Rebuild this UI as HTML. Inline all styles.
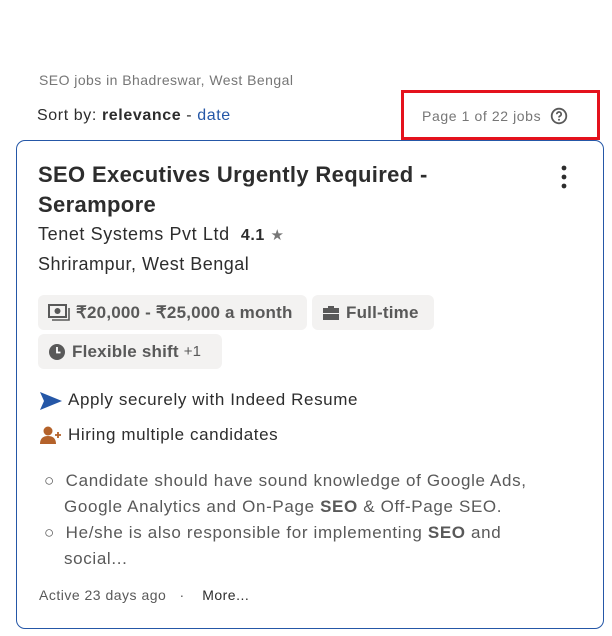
<!DOCTYPE html>
<html><head><meta charset="utf-8"><style>
*{margin:0;padding:0;box-sizing:border-box}
body{width:612px;height:636px;background:#fff;font-family:"Liberation Sans",sans-serif;color:#2d2d2d;position:relative;overflow:hidden}
.a{position:absolute;white-space:nowrap}
.chip{position:absolute;background:#f3f2f1;border-radius:6px;height:35px;font-weight:bold;font-size:17px;color:#595959;display:flex;align-items:center;padding-left:10px;letter-spacing:0.2px}
.chip svg{margin-right:6px}
.desc{font-size:17px;color:#595959;letter-spacing:0.65px}
</style></head><body>
<div class="a" style="left:39px;top:72px;font-size:14px;color:#767676;letter-spacing:0.45px">SEO jobs in Bhadreswar, West Bengal</div>
<div class="a" style="left:37px;top:107px;font-size:16px;color:#2d2d2d;letter-spacing:0.6px">Sort by: <b>relevance</b> - <span style="color:#2557a7">date</span></div>
<div class="a" style="left:401px;top:90px;width:199px;height:50px;border:3px solid #e4121d"></div>
<div class="a" style="left:422px;top:108px;font-size:14px;color:#767676;letter-spacing:0.6px">Page 1 of 22 jobs</div>
<svg class="a" style="left:550px;top:107px" width="18" height="18" viewBox="0 0 18 18"><circle cx="9" cy="9" r="7.3" fill="none" stroke="#595959" stroke-width="1.8"/><path d="M6.8 7.2a2.2 2.2 0 1 1 3 2c-.7.3-.8.7-.8 1.3" fill="none" stroke="#595959" stroke-width="1.7"/><circle cx="9" cy="12.8" r="1" fill="#595959"/></svg>
<div class="a" style="left:16px;top:140px;width:588px;height:489px;border:1px solid #2557a7;border-radius:9px"></div>
<div class="a" style="left:38px;top:160px;font-size:22px;font-weight:bold;line-height:30px;color:#2d2d2d;letter-spacing:0.35px">SEO Executives Urgently Required -<br>Serampore</div>
<svg class="a" style="left:560px;top:165px" width="8" height="24" viewBox="0 0 8 24"><circle cx="4" cy="3" r="2.4" fill="#2d2d2d"/><circle cx="4" cy="12" r="2.4" fill="#2d2d2d"/><circle cx="4" cy="21" r="2.4" fill="#2d2d2d"/></svg>
<div class="a" style="left:38px;top:224px;font-size:18px;letter-spacing:0.6px">Tenet Systems Pvt Ltd&nbsp; <b style="font-size:16px">4.1</b> <span style="color:#767676;font-size:15px">★</span></div>
<div class="a" style="left:38px;top:254px;font-size:18px;letter-spacing:0.5px">Shrirampur, West Bengal</div>
<div class="chip" style="left:38px;top:295px;width:269px"><svg width="22" height="18" viewBox="0 0 22 18"><rect x="1" y="1" width="17" height="12" fill="none" stroke="#595959" stroke-width="2"/><circle cx="9.5" cy="7" r="3" fill="#595959"/><path d="M4 16h17V4" fill="none" stroke="#595959" stroke-width="1.6"/></svg>₹20,000 - ₹25,000 a month</div>
<div class="chip" style="left:312px;top:295px;width:122px"><svg width="18" height="16" viewBox="0 0 18 16"><path d="M6 3V1h6v2h5v5H1V3z M1 9h16v6H1z" fill="#595959"/></svg>Full-time</div>
<div class="chip" style="left:38px;top:334px;width:184px"><svg width="18" height="18" viewBox="0 0 18 18"><circle cx="9" cy="9" r="8" fill="#595959"/><path d="M9 4v5.5h3.5" fill="none" stroke="#fff" stroke-width="1.8"/></svg>Flexible shift <span style="font-weight:normal;font-size:15px;margin-left:5px">+1</span></div>
<svg class="a" style="left:40px;top:392px" width="22" height="18" viewBox="0 0 22 18"><path d="M0 0L22 9 0 18 4 9z" fill="#2557a7"/></svg>
<div class="a" style="left:68px;top:390px;font-size:17px;letter-spacing:0.6px">Apply securely with Indeed Resume</div>
<svg class="a" style="left:40px;top:426px" width="22" height="18" viewBox="0 0 22 18"><circle cx="8" cy="5" r="4.5" fill="#b4622a"/><path d="M0 18c0-6 3.5-8 8-8s8 2 8 8z" fill="#b4622a"/><path d="M18 6v6M15 9h6" stroke="#b4622a" stroke-width="1.8"/></svg>
<div class="a" style="left:68px;top:425px;font-size:17px;letter-spacing:0.6px">Hiring multiple candidates</div>
<div class="a desc" style="left:44px;top:468px;line-height:26px">
<div>○&nbsp; Candidate should have sound knowledge of Google Ads,</div>
<div style="padding-left:20px">Google Analytics and On-Page <b>SEO</b> &amp; Off-Page SEO.</div>
<div>○&nbsp; He/she is also responsible for implementing <b>SEO</b> and</div>
<div style="padding-left:20px">social...</div>
</div>
<div class="a" style="left:39px;top:587px;font-size:14px;color:#595959;letter-spacing:0.5px">Active 23 days ago&nbsp;&nbsp; · &nbsp;&nbsp;&nbsp;<span style="color:#2d2d2d">More...</span></div>
</body></html>
